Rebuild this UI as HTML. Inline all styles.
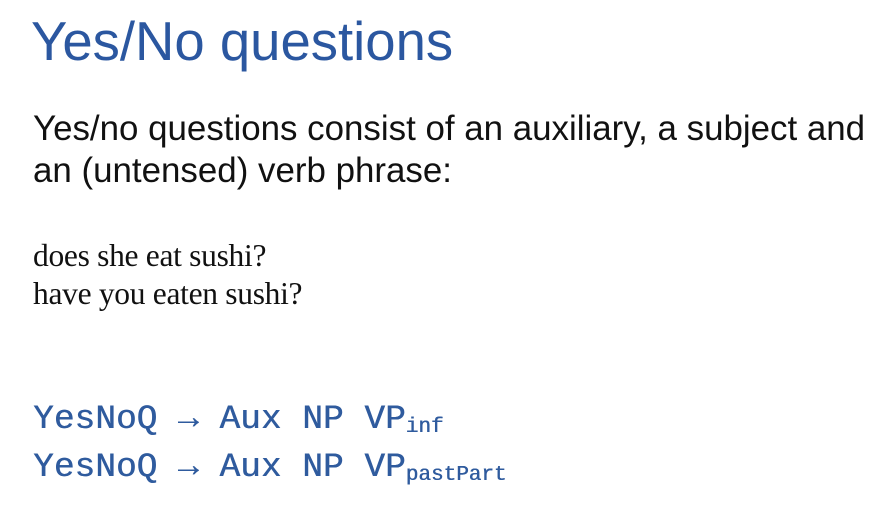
<!DOCTYPE html>
<html><head><style>
body{margin:0;width:896px;height:509px;background:#fff;overflow:hidden;position:relative}
div{position:absolute;white-space:nowrap}
.t{left:31px;top:10px;font:54.5px "Liberation Sans",sans-serif;color:#2b57a0}
.b{left:33px;font:34.9px/42px "Liberation Sans",sans-serif;color:#111}
.s{left:33px;font:31.5px "Liberation Serif",serif;color:#111;letter-spacing:-0.3px}
.m{left:33px;font:34.5px "Liberation Mono",monospace;color:#2f5b9e;text-shadow:0.5px 0 0 #2f5b9e}
.m sub{font-size:21px;vertical-align:-4px}
</style></head><body>
<div class="t">Yes/No questions</div>
<div class="b" style="top:108px">Yes/no questions consist of an auxiliary, a subject and<br>an (untensed) verb phrase:</div>
<div class="s" style="top:238px">does she eat sushi?</div>
<div class="s" style="top:276px">have you eaten sushi?</div>
<div class="m" style="top:400px">YesNoQ → Aux NP VP<sub>inf</sub></div>
<div class="m" style="top:448px">YesNoQ → Aux NP VP<sub>pastPart</sub></div>
</body></html>
